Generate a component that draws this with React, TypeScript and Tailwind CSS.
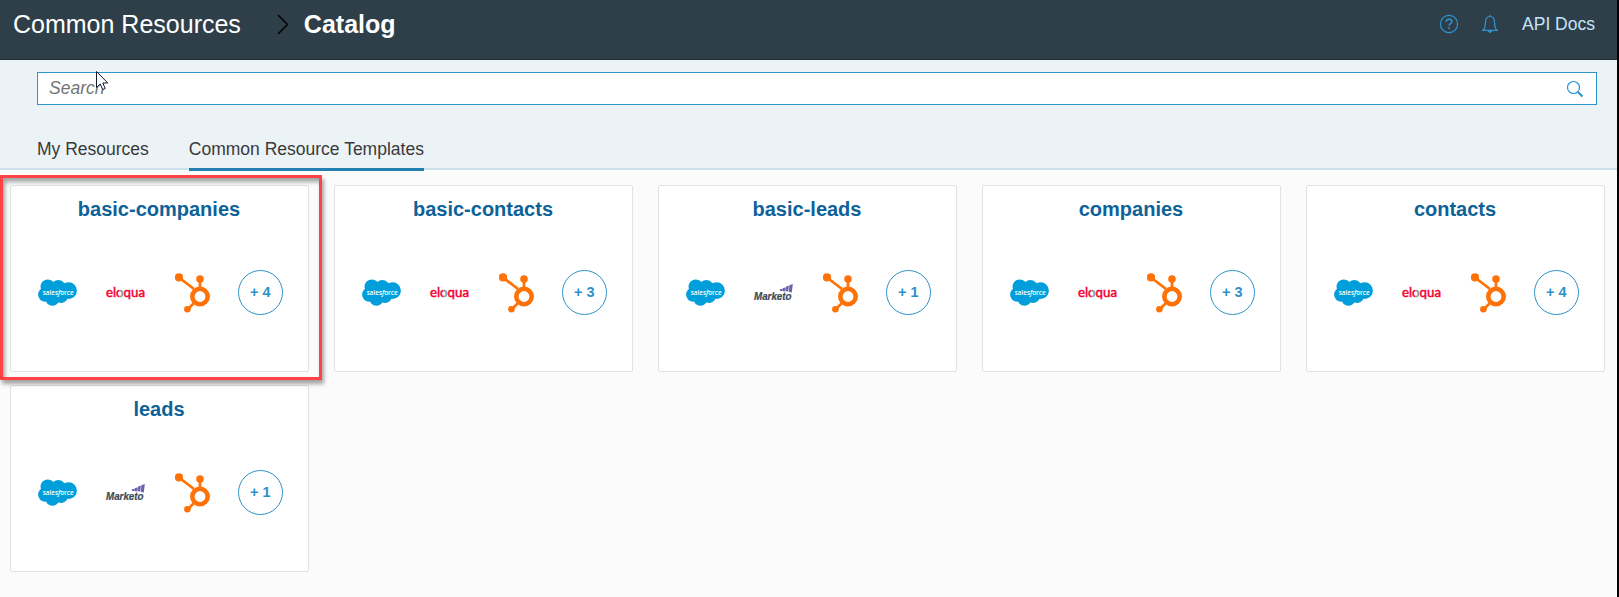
import { useId } from "react";

function Salesforce() {
  return (
    <svg width="41" height="30" viewBox="0 0 41 30" className="block overflow-visible">
      <g fill="#009fdb">
        <circle cx="10.800" cy="8.700" r="7.300" />
        <circle cx="21.400" cy="9" r="7" />
        <circle cx="31.600" cy="12.600" r="8.300" />
        <circle cx="8.300" cy="16.600" r="7.200" />
        <circle cx="15.400" cy="20.800" r="7" />
        <circle cx="24" cy="18.200" r="6.900" />
        <rect x="8" y="5" width="20" height="15" />
      </g>
      <text x="5.700" y="16.500" textLength="31" lengthAdjust="spacingAndGlyphs" fill="#fff" className="font-['Open_Sans',sans-serif] text-[7.8px] font-semibold">
        sales<tspan fontStyle="italic">f</tspan>orce
      </text>
    </svg>
  );
}

function Eloqua() {
  const id = useId();
  return (
    <svg width="41" height="22" viewBox="0 0 41 22" className="block overflow-visible">
      <defs>
        <linearGradient id={id} gradientUnits="userSpaceOnUse" x1="0" x2="41" y1="0" y2="0">
          <stop offset="0.340" stopColor="#f5002f" />
          <stop offset="0.340" stopColor="#8d9299" />
          <stop offset="0.450" stopColor="#8d9299" />
          <stop offset="0.450" stopColor="#f5002f" />
        </linearGradient>
      </defs>
      <text x="1" y="14.500" textLength="39" lengthAdjust="spacingAndGlyphs" fill={`url(#${id})`} stroke={`url(#${id})`} strokeWidth="0.450" className="font-[Lato,sans-serif] text-[13.5px] font-normal">
        eloqua
      </text>
    </svg>
  );
}

function Marketo() {
  return (
    <svg width="41" height="22" viewBox="0 0 41 22" className="block overflow-visible">
      <text x="1" y="18.300" textLength="37.500" lengthAdjust="spacingAndGlyphs" fill="#3c4a57" stroke="#3c4a57" strokeWidth="0.200" className="font-['Liberation_Sans',sans-serif] text-[10px] font-bold italic">
        Marketo
      </text>
      <g fill="#6c63ae">
        <path d="M27 7h2.600l-.4 2H27zM29.800 6l2.900-.500-.6 3.900-2.500-.4zM33 4.600l2.900-.8-.7 5.800-2.500-.4zM36.300 3.200L39.800 2l-1 8.400-3-.6z" />
      </g>
    </svg>
  );
}

function HubSpot() {
  return (
    <svg width="40" height="40" viewBox="0 0 40 40" className="block">
      <g transform="translate(-0.500 0)">
        <g fill="none" stroke="#ff7208" strokeWidth="2.800">
          <path d="M6.500 4.500L21.500 16M27.500 6v11M22 29.500l-7 7" />
          <circle cx="27.500" cy="23.500" r="7.700" strokeWidth="4.600" />
        </g>
        <g fill="#ff7208">
          <circle cx="6.500" cy="4.400" r="4.100" />
          <circle cx="27.500" cy="6" r="3.800" />
          <circle cx="14.900" cy="36.200" r="3.300" />
        </g>
      </g>
    </svg>
  );
}

const cards = [
  { name: "basic-companies", second: "eloqua", more: 4 },
  { name: "basic-contacts", second: "eloqua", more: 3 },
  { name: "basic-leads", second: "marketo", more: 1 },
  { name: "companies", second: "eloqua", more: 3 },
  { name: "contacts", second: "eloqua", more: 4 },
  { name: "leads", second: "marketo", more: 1 },
];

function Card({ name, second, more }: { name: string; second: string; more: number }) {
  return (
    <article className="h-[187px] rounded-[2px] border border-[#e2e2e2] bg-white px-[13px]">
      <h2 className="mt-[9px] pr-px text-center text-[20px] leading-[28px] font-bold text-[#0d6299]">{name}</h2>
      <div className="mt-[47px] grid w-[270px] grid-cols-4 place-items-center">
        <Salesforce />
        {second === "eloqua" ? <Eloqua /> : <Marketo />}
        <HubSpot />
        <div className="flex size-[45px] items-center justify-center rounded-full border border-[#2f93cb] text-[14.5px] font-bold text-[#2f8fc8]">
          + {more}
        </div>
      </div>
    </article>
  );
}

export default function App() {
  return (
    <div className="relative h-[597px] w-[1619px] overflow-hidden border-r-2 border-black bg-[#fbfbfb] font-['Liberation_Sans',Arial,sans-serif]">
      <header className="flex h-[60px] items-center border-b border-[#23303a] bg-[#2f3f4a] pb-[11px] pl-[13px] pr-[22px] text-white">
        <span className="pt-0.5 text-[25px]">Common Resources</span>
        <svg width="12" height="21" viewBox="0 0 12 21" className="ml-9 mt-px" fill="none" stroke="#000" strokeWidth="1.5">
          <path d="M1 1l9.500 9.500L1 20" />
        </svg>
        <span className="ml-[15px] pt-0.5 text-[25px] font-bold">Catalog</span>
        <div className="ml-auto flex items-center">
          <svg width="20" height="20" viewBox="0 0 20 20" fill="none" stroke="#2d95d2" strokeWidth="1.200">
            <circle cx="10" cy="10" r="8.600" />
            <path d="M7.200 8c0-1.800 1.200-2.800 2.800-2.800s2.800 1 2.800 2.500c0 2-2.700 2-2.700 4.100" strokeWidth="1.500" />
            <path d="M10.100 13.200v1.700" strokeWidth="1.700" />
          </svg>
          <svg width="18" height="20" viewBox="0 0 18 20" className="ml-[22px]" fill="none" stroke="#2d95d2" strokeWidth="1.200">
            <path d="M9 1v1.500M1 16.300h16M2.500 16c1.600-1.800 1.900-3.600 1.900-7C4.400 4.600 6.200 2.500 9 2.500s4.600 2.100 4.600 6.300c0 3.600.3 5.400 1.900 7.200" />
            <path d="M6.500 17h5L9 19.200z" fill="#2d95d2" stroke="none" />
          </svg>
          <span className="ml-[23px] text-[17.5px] text-[#c3e4fa]">API Docs</span>
        </div>
      </header>

      <section className="h-[110px] border-b-2 border-[#cde2ed] bg-[#ebf3f7] pl-[37px] pr-5 pt-3">
        <div className="flex h-[33px] items-center justify-between border border-[#2d95cb] bg-white pl-[11px] pr-3">
          <span className="text-[17.5px] italic text-[#757575]">Search</span>
          <svg width="18" height="18" viewBox="0 0 18 18" fill="none" stroke="#2d95d2">
            <circle cx="7.500" cy="7.500" r="6" strokeWidth="1.200" />
            <path d="M12 12l4.500 4.500" strokeWidth="2.200" />
          </svg>
        </div>
        <nav className="mt-[28px] flex gap-10 text-[17.5px] text-[#3a3a3a]">
          <span className="h-[38px] leading-[33px]">My Resources</span>
          <span className="h-[38px] border-b-[3px] border-[#237fb0] leading-[33px]">Common Resource Templates</span>
        </nav>
      </section>

      <main className="grid grid-cols-[repeat(5,299px)] gap-x-[25px] gap-y-[13px] pl-[10px] pt-[15px]">
        {cards.map((card) => (
          <Card key={card.name} {...card} />
        ))}
      </main>

      <div className="absolute left-0 top-[175px] h-[205px] w-[322px] border-[3px] border-[#ff4344] shadow-[2px_4px_4px_rgba(0,0,0,0.35),inset_2px_4px_4px_rgba(0,0,0,0.35)]" />
      <svg width="13" height="20" viewBox="0 0 13 20" className="absolute left-24 top-[71px]" fill="#fff" stroke="#111827" strokeWidth="1">
        <path d="M.5.500v16l3.700-3.500 2.600 5.500 2.400-1-2.400-5.500h5z" />
      </svg>
    </div>
  );
}
